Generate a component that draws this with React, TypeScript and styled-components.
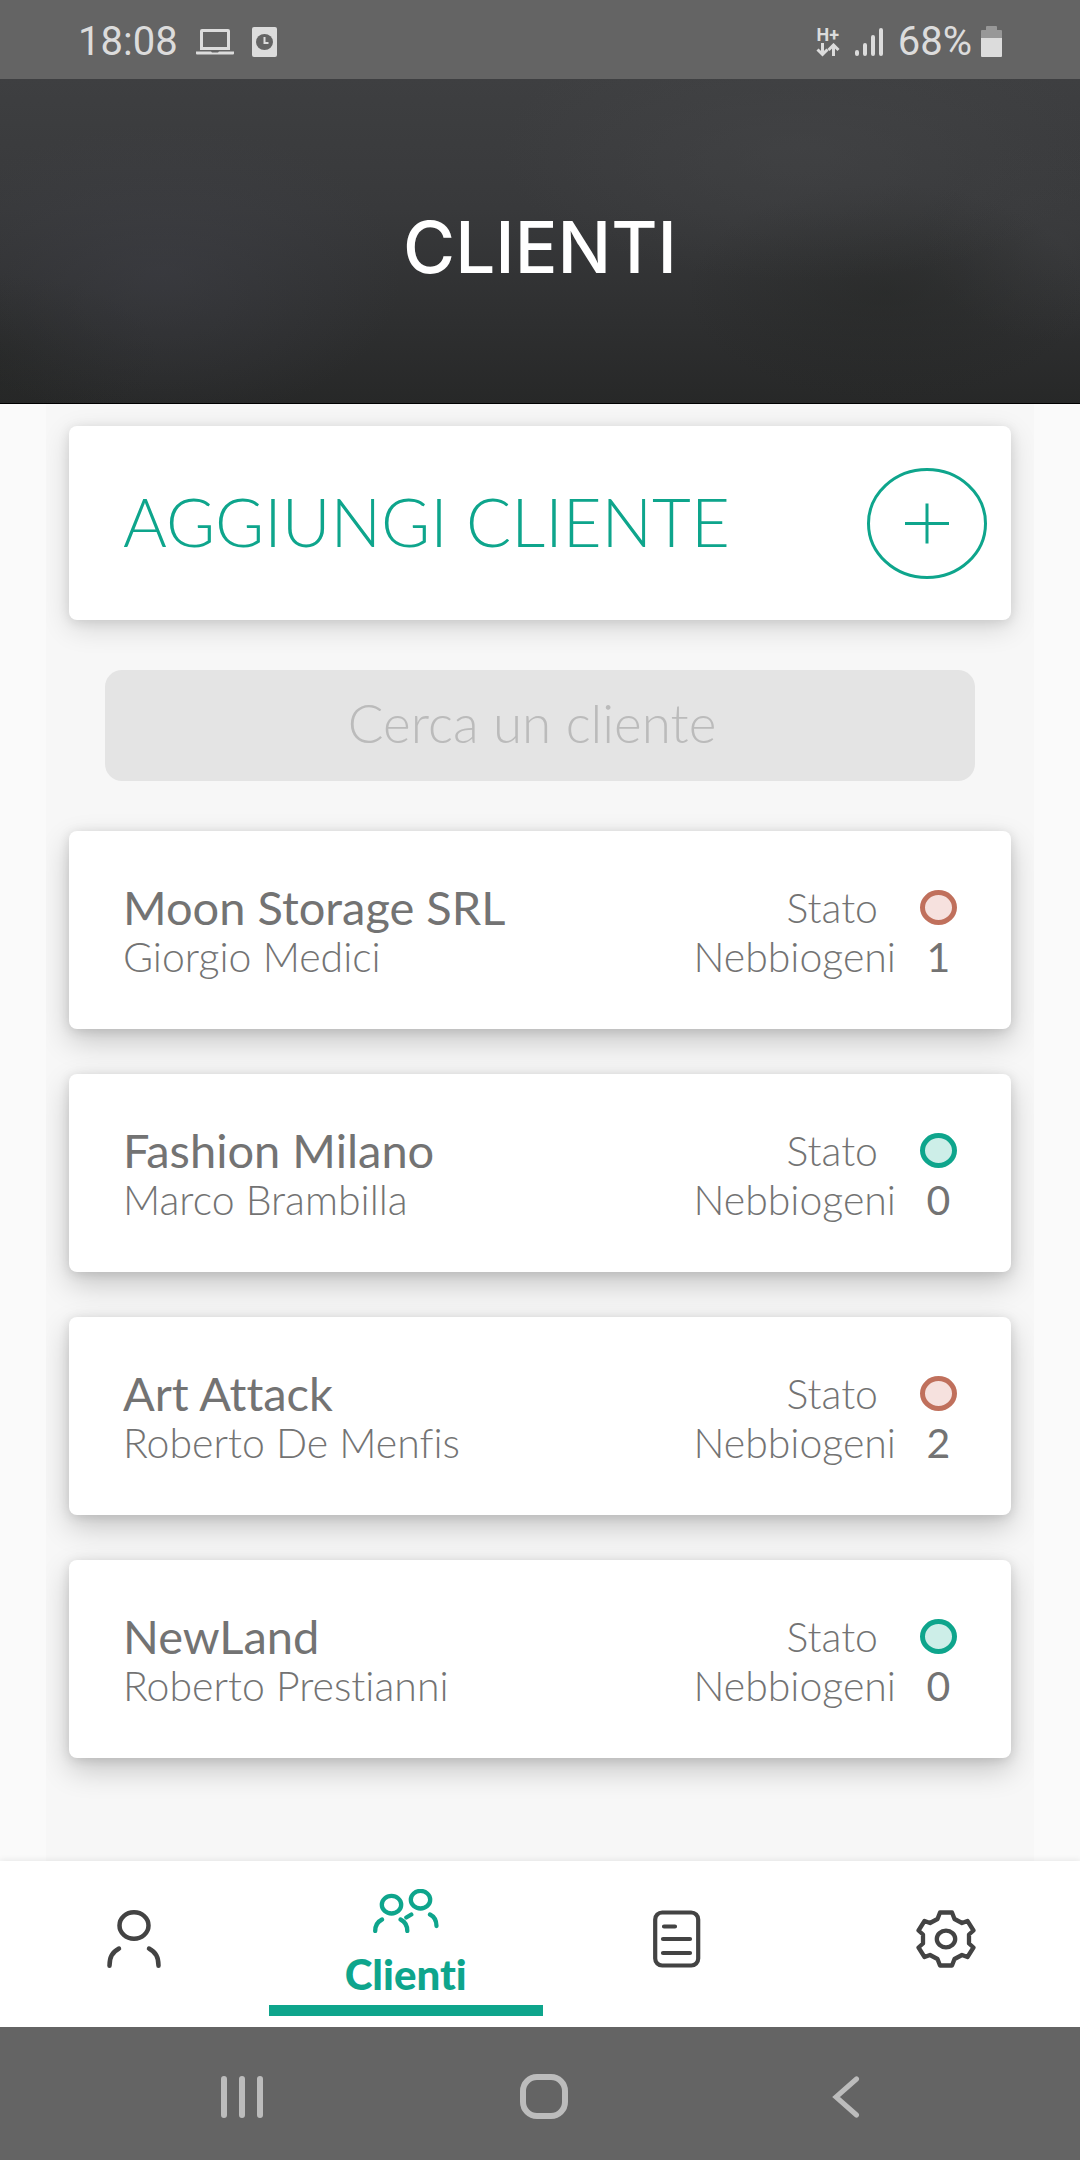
import React from "react";
import styled, { createGlobalStyle } from "styled-components";

const teal = "#0ea58c";
const ink = "#737373";

const GlobalStyle = createGlobalStyle`
  *, *::before, *::after { box-sizing: border-box; }
  body { margin: 0; background: #fafafa; font-family: Lato, "Open Sans", sans-serif; font-variant-ligatures: none; }
  button, input { font: inherit; font-variant-ligatures: none; color: inherit; border: 0; padding: 0; margin: 0; background: none; }
  h1, h2, p, dl, dd, dt, ul { margin: 0; padding: 0; font-weight: inherit; }
  svg { display: block; flex: none; }
`;

const Screen = styled.div`
  display: flex;
  flex-direction: column;
  min-height: 100vh;
`;

const StatusBar = styled.div`
  display: flex;
  justify-content: space-between;
  align-items: center;
  height: 79px;
  padding: 4px 78px 0;
  background: #646464;
  color: #dcdcdc;
  font: 400 40px/46px Roboto, sans-serif;
`;

const StatusGroup = styled.div<{ $gap: number }>`
  display: flex;
  align-items: center;
  gap: ${(p) => p.$gap}px;
`;

const Network = styled.div`
  display: flex;
  flex-direction: column;
  align-items: center;
  font: 700 18px/17px Roboto, sans-serif;
`;

const Header = styled.header`
  display: flex;
  align-items: center;
  justify-content: center;
  height: 325px;
  padding-top: 12px;
  border-bottom: 1px solid #000;
  color: #fff;
  background:
    radial-gradient(ellipse 240px 150px at 15% 60%, rgba(66, 67, 76, 0.4), transparent),
    radial-gradient(ellipse 300px 130px at 74% 22%, rgba(72, 73, 75, 0.4), transparent),
    radial-gradient(ellipse 200px 110px at 82% 66%, rgba(34, 36, 34, 0.4), transparent),
    radial-gradient(ellipse 120px 100px at 97% 50%, rgba(64, 65, 67, 0.4), transparent),
    radial-gradient(ellipse 160px 80px at 0% 85%, rgba(34, 36, 34, 0.4), transparent),
    linear-gradient(#3e3f41, #38393b 40%, #2e2f30 75%, #272828);
`;

const Title = styled.h1`
  font: 500 71px/80px Inter, sans-serif;
`;

const Main = styled.main`
  display: flex;
  flex-direction: column;
  flex: 1;
  margin: 0 46px;
  padding: 22px 23px 60px;
  overflow: hidden;
  background: #f7f7f7;
`;

const AddCard = styled.button`
  display: flex;
  align-items: center;
  justify-content: space-between;
  height: 194px;
  padding: 0 24px 0 54px;
  border-radius: 8px;
  background: #fff;
  color: ${teal};
  font-size: 67px;
  line-height: 76px;
  font-weight: 300;
  box-shadow: 0 8px 28px rgba(0, 0, 0, 0.14), 0 2px 12px rgba(0, 0, 0, 0.1);
`;

const AddLabel = styled.span`
  padding-bottom: 5px;
`;

const Search = styled.input`
  height: 111px;
  margin: 50px 36px;
  padding: 0 16px 6px 0;
  border-radius: 17px;
  background: #e4e4e4;
  color: #6f6f6f;
  font-size: 53px;
  font-weight: 300;
  text-align: center;
  outline: none;
  &::placeholder { color: #bbb; opacity: 1; }
`;

const ClientList = styled.ul`
  display: flex;
  flex-direction: column;
  gap: 45px;
  list-style: none;
`;

const ClientCard = styled.li`
  display: flex;
  justify-content: space-between;
  height: 198px;
  padding: 52px 54px 0;
  border-radius: 8px;
  background: #fff;
  color: ${ink};
  box-shadow: 0 12px 30px rgba(0, 0, 0, 0.2), 0 2px 12px rgba(0, 0, 0, 0.12);
`;

const Company = styled.h2`
  font-size: 47px;
  line-height: 49px;
  font-weight: 400;
`;

const Contact = styled.p`
  font-size: 41px;
  line-height: 49px;
  font-weight: 300;
`;

const StatRow = styled.div<{ $gap: number }>`
  display: flex;
  align-items: center;
  justify-content: flex-end;
  gap: ${(p) => p.$gap}px;
  height: 49px;
  font-size: 41px;
  line-height: 49px;
`;

const StatLabel = styled.dt`
  font-weight: 300;
`;

const StatValue = styled.dd`
  width: 37px;
  text-align: center;
`;

const Dot = styled.span<{ $alert: boolean }>`
  display: block;
  height: 35px;
  border: 5px solid ${(p) => (p.$alert ? "#c0705c" : teal)};
  border-radius: 50%;
  background: ${(p) => (p.$alert ? "#f6e1de" : "#cdeee8")};
`;

const TabBar = styled.nav`
  display: flex;
  height: 166px;
  background: #fff;
  box-shadow: 0 -1px 6px rgba(0, 0, 0, 0.08);
`;

const Tab = styled.button<{ $active?: boolean }>`
  display: flex;
  flex-direction: column;
  align-items: center;
  justify-content: ${(p) => (p.$active ? "flex-start" : "center")};
  flex: ${(p) => (p.$active ? "0 0 274px" : "1")};
  gap: 18px;
  height: 155px;
  padding-top: ${(p) => (p.$active ? "28px" : "11px")};
  border-bottom: 11px solid ${(p) => (p.$active ? teal : "transparent")};
  color: ${(p) => (p.$active ? teal : "#434343")};
  font-family: "Lato Black", Lato, sans-serif;
  font-size: 42px;
  line-height: 46px;
  font-weight: 900;
`;

const SystemBar = styled.div`
  display: flex;
  justify-content: center;
  gap: 2px;
  height: 133px;
  padding: 6px 0 0 8px;
  background: #646464;
  color: #bcbcbc;
`;

const SystemButton = styled.button`
  display: flex;
  align-items: center;
  justify-content: center;
  width: 28%;
`;

const clients = [
  { company: "Moon Storage SRL", contact: "Giorgio Medici", foggers: 1 },
  { company: "Fashion Milano", contact: "Marco Brambilla", foggers: 0 },
  { company: "Art Attack", contact: "Roberto De Menfis", foggers: 2 },
  { company: "NewLand", contact: "Roberto Prestianni", foggers: 0 },
];

const stroke = {
  fill: "none",
  stroke: "currentColor",
  strokeLinecap: "round",
  strokeLinejoin: "round",
} as const;

const LaptopIcon = () => (
  <svg width="38" height="28" viewBox="0 0 38 28" fill="currentColor">
    <path fillRule="evenodd" d="M6 1h26a2 2 0 0 1 2 2v19H4V3a2 2 0 0 1 2-2zm1 3v15h24V4z" />
    <path d="M0 23.500h15l1 1h6l1-1h15v2a1 1 0 0 1-1 1H1a1 1 0 0 1-1-1z" />
  </svg>
);

const ClockCardIcon = () => (
  <svg width="25" height="30" viewBox="0 0 25 30">
    <rect width="25" height="30" rx="2" fill="currentColor" />
    <ellipse cx="12.500" cy="15" rx="8.500" ry="8" fill="#646464" />
    <path d="M12.500 10v6h4" fill="none" stroke="currentColor" strokeWidth="2" />
  </svg>
);

const ArrowsIcon = () => (
  <svg width="24" height="14" viewBox="0 0 24 14" {...stroke} strokeLinecap="butt" strokeLinejoin="miter" strokeWidth="3">
    <path d="M6.500 0v11M1.500 6.500l5 5 5-5M17.500 13V2M12.500 7l5-5 5 5" />
  </svg>
);

const SignalIcon = () => (
  <svg width="28" height="30" viewBox="0 0 28 30" {...stroke} strokeWidth="4">
    <path d="M2 25v2M10 18v9M18 10v17M26 3v24" />
  </svg>
);

const BatteryIcon = () => (
  <svg width="21" height="31" viewBox="0 0 21 31" fill="currentColor">
    <path d="M0 12V5a1 1 0 0 1 1-1h4V1a1 1 0 0 1 1-1h9a1 1 0 0 1 1 1v3h4a1 1 0 0 1 1 1v7z" fill="#989898" />
    <path d="M0 12h21v18a1 1 0 0 1-1 1H1a1 1 0 0 1-1-1z" />
  </svg>
);

const PlusIcon = () => (
  <svg width="120" height="111" viewBox="0 0 120 111" fill="none" stroke="currentColor" strokeWidth="3">
    <ellipse cx="60" cy="55.500" rx="58.500" ry="54" />
    <path d="M38 55.500h44M60 35.500v40" />
  </svg>
);

const PersonIcon = () => (
  <svg width="54" height="58" viewBox="0 0 54 58" {...stroke} strokeWidth="4.500">
    <ellipse cx="27" cy="15.500" rx="14.500" ry="13.200" />
    <path d="M12 38.500C5 42.500 2.500 47 2.500 55.700M42 38.500c7 4 9.500 8.500 9.500 17.200" />
  </svg>
);

const PeopleIcon = () => (
  <svg width="66" height="44" viewBox="0 0 66 44" {...stroke} strokeWidth="4.300">
    <ellipse cx="18.500" cy="15.700" rx="9.700" ry="8.800" />
    <ellipse cx="47.500" cy="10.700" rx="9.700" ry="8.800" />
    <path d="M9 30.500c-5 2.500-6.800 6-6.800 11.500M27.600 30.500c5 2.500 6.700 6 6.700 11.500M33.300 28.500l5-3M57 25.500c5 2.500 6.500 6 6.500 11.500" />
  </svg>
);

const DocumentIcon = () => (
  <svg width="48" height="58" viewBox="0 0 48 58" {...stroke} strokeWidth="4.200">
    <rect x="2.200" y="2.500" width="43" height="53" rx="7" />
    <path d="M11 16.500h11M10 29h27M10 43h27" />
  </svg>
);

const GearIcon = () => (
  <svg width="60" height="58" viewBox="-30 -29 60 58" {...stroke} strokeWidth="4.300">
    <path d="M-6-26.500H6L8.500-20 16-16l5.500-2 6 9.500-4.500 4V4.500l4.500 4L21.500 18l-5.500-2L8.500 20 6 26.500H-6L-8.500 20-16 16l-5.500 2-6-9.500 4.500-4V-4.500l-4.500-4L-21.500-18l5.500 2L-8.500-20z" />
    <ellipse rx="9.200" ry="8.300" />
  </svg>
);

const RecentsIcon = () => (
  <svg width="42" height="42" viewBox="0 0 42 42" {...stroke} strokeWidth="6">
    <path d="M3 3v36M21 3v36M39 3v36" />
  </svg>
);

const HomeIcon = () => (
  <svg width="48" height="45" viewBox="0 0 48 45" {...stroke} strokeWidth="6">
    <rect x="3" y="3" width="42" height="39" rx="14" />
  </svg>
);

const BackIcon = () => (
  <svg width="28" height="42" viewBox="0 0 28 42" {...stroke} strokeLinejoin="miter" strokeWidth="5">
    <path d="M24.500 3L4 21l20.500 18" />
  </svg>
);

export default function App() {
  return (
    <Screen>
      <GlobalStyle />
      <StatusBar>
        <StatusGroup $gap={18}>
          18:08
          <LaptopIcon />
          <ClockCardIcon />
        </StatusGroup>
        <StatusGroup $gap={15}>
          <Network>
            H+
            <ArrowsIcon />
          </Network>
          <SignalIcon />
          <StatusGroup $gap={9}>
            68%
            <BatteryIcon />
          </StatusGroup>
        </StatusGroup>
      </StatusBar>

      <Header>
        <Title>CLIENTI</Title>
      </Header>

      <Main>
        <AddCard type="button">
          <AddLabel>AGGIUNGI CLIENTE</AddLabel>
          <PlusIcon />
        </AddCard>
        <Search type="text" placeholder="Cerca un cliente" aria-label="Cerca un cliente" />
        <ClientList>
          {clients.map((client) => (
            <ClientCard key={client.company}>
              <div>
                <Company>{client.company}</Company>
                <Contact>{client.contact}</Contact>
              </div>
              <dl>
                <StatRow $gap={42}>
                  <StatLabel>Stato</StatLabel>
                  <StatValue>
                    <Dot $alert={client.foggers > 0} />
                  </StatValue>
                </StatRow>
                <StatRow $gap={24}>
                  <StatLabel>Nebbiogeni</StatLabel>
                  <StatValue>{client.foggers}</StatValue>
                </StatRow>
              </dl>
            </ClientCard>
          ))}
        </ClientList>
      </Main>

      <TabBar>
        <Tab type="button" aria-label="Profilo">
          <PersonIcon />
        </Tab>
        <Tab type="button" $active aria-current="page">
          <PeopleIcon />
          Clienti
        </Tab>
        <Tab type="button" aria-label="Documenti">
          <DocumentIcon />
        </Tab>
        <Tab type="button" aria-label="Impostazioni">
          <GearIcon />
        </Tab>
      </TabBar>

      <SystemBar>
        <SystemButton type="button" aria-label="Recenti">
          <RecentsIcon />
        </SystemButton>
        <SystemButton type="button" aria-label="Home">
          <HomeIcon />
        </SystemButton>
        <SystemButton type="button" aria-label="Indietro">
          <BackIcon />
        </SystemButton>
      </SystemBar>
    </Screen>
  );
}
